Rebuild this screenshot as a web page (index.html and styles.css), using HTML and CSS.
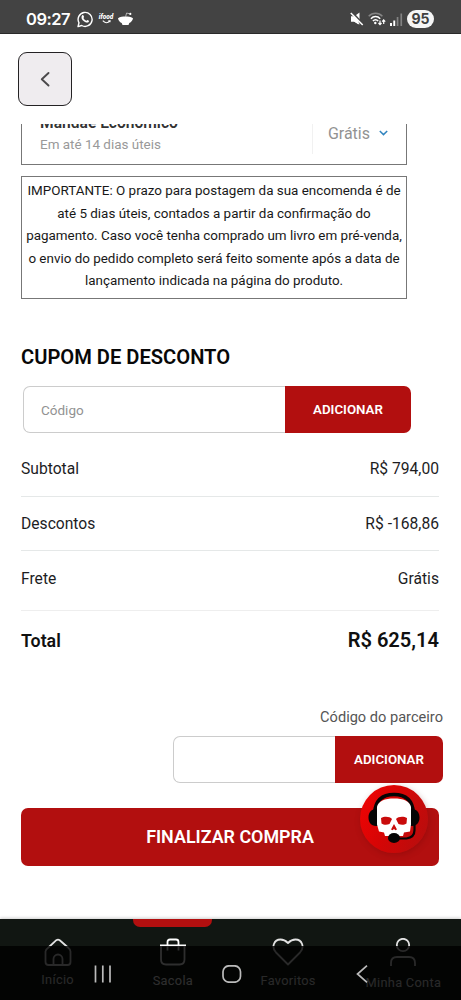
FILE: index.html
```html
<!DOCTYPE html>
<html lang="pt-BR">
<head>
<meta charset="utf-8">
<meta name="viewport" content="width=device-width">
<title>Sacola</title>
<link rel="stylesheet" href="styles.css">
</head>
<body>
<div class="screen">
  <header class="status">
    <span class="clock">09:27</span>
    <svg class="whats" width="16" height="17" viewBox="0 0 16 17" fill="none"><path d="M1 15.6 2 11.8A7 7 0 1 1 4.7 14.5Z" stroke="#fff" stroke-width="1.4" stroke-linejoin="round"/><path d="M5.1 4.4c.8-.7 1.3-.3 1.9 1.4.2.6-.7 1-.5 1.4.6 1.2 1.500 2 2.700 2.500.4.2.8-1 1.300-.8 1.500.6 1.800.9 1.300 1.800-1 1.500-3 1-4.900-.4C4.700 8.500 3.700 6 5.100 4.400Z" fill="#fff"/></svg>
    <span class="ifood"><span class="ifood-name">ifood</span><svg width="9" height="4" viewBox="0 0 9 4" fill="none"><path d="M.8.7c2 2.600 5 2.600 7 .2M6.300.7l1.800 0-.2 1.500" stroke="#fff" stroke-width="1.100"/></svg></span>
    <svg class="bowl" width="15" height="14" viewBox="0 0 15 14"><path d="M0 6.200C2 4.800 5 4.500 7.400 4.500s5.400.3 7.600 1.700c-.3 2.200-1.600 3.900-3.700 4.700L10.500 13h-6l-.8-2.100C1.600 10 .3 8.400 0 6.200Z" fill="#fff"/><path d="M7.500 5 8.600 1l3 .8" fill="none" stroke="#ccc" stroke-width=".8"/><circle cx="12.300" cy="1.900" r="1.100" fill="#fff"/></svg>
    <span class="status-right">
      <svg width="14" height="14" viewBox="0 0 14 14"><path d="M1 4.500h3L9.500.500v12L4 9.500H1Z" fill="#fff"/><path d="M1.500.500 13 13" stroke="#434343" stroke-width="3.200"/><path d="M.8 1 12.700 13" stroke="#fff" stroke-width="1.500"/><path d="M1 4.500h3.300L8.500 9v3.500L4 9.500H1Z" fill="#fff"/></svg>
      <svg width="18" height="14" viewBox="0 0 18 14" fill="none"><path d="M.7 4.300C4.600.200 10.500.200 14.400 4.300" stroke="#858585" stroke-width="1.500"/><path d="M2.900 6.700c2.700-2.800 6.600-2.800 9.300 0M4.900 9c1.600-1.700 3.700-1.700 5.300 0" stroke="#fff" stroke-width="1.500"/><circle cx="7.300" cy="11" r="1.200" fill="#fff"/><path d="M12 8.500v4m-1.500-1.500L12 12.700l1.500-1.700M15.700 12V8m-1.500 1.600 1.500-1.700 1.500 1.700" stroke="#fff" stroke-width="1.200"/></svg>
      <svg width="13" height="13" viewBox="0 0 13 13"><path d="M0 10h2v3H0Z M3.300 7.500h1.900V13H3.300Z" fill="#fff"/><path d="M6.700 4h1.700v9H6.700ZM10.400.500h1.700V13h-1.700Z" fill="#828282"/></svg>
      <b class="battery">95</b>
    </span>
  </header>

  <div class="topbar">
    <button class="back" aria-label="Voltar"><svg width="12" height="18" viewBox="0 0 12 18" fill="none"><path d="M9.500 3 2.800 9.300l6.700 6.200" stroke="#4b494b" stroke-width="1.900" stroke-linecap="round" stroke-linejoin="round"/></svg></button>
  </div>

  <main class="content">
    <section class="shipping">
      <div class="ship-info">
        <div class="ship-name">Mandaê Econômico</div>
        <div class="ship-time">Em até 14 dias úteis</div>
      </div>
      <div class="ship-price"><span>Grátis</span><svg width="9" height="6" viewBox="0 0 9 6" fill="none"><path d="m.8 1 3.700 3.600L8.200 1" stroke="#3285bf" stroke-width="1.500"/></svg></div>
    </section>

    <p class="notice">IMPORTANTE: O prazo para postagem da sua encomenda é de<br>até 5 dias úteis, contados a partir da confirmação do<br>pagamento. Caso você tenha comprado um livro em pré-venda,<br>o envio do pedido completo será feito somente após a data de<br>lançamento indicada na página do produto.</p>

    <h2 class="title">CUPOM DE DESCONTO</h2>
    <div class="field coupon"><span class="input">Código</span><button class="add">ADICIONAR</button></div>

    <div class="summary">
      <div class="line"><span>Subtotal</span><span>R$ 794,00</span></div>
      <div class="line"><span>Descontos</span><span>R$ -168,86</span></div>
      <div class="line freight"><span>Frete</span><span>Grátis</span></div>
      <div class="line total"><span>Total</span><span class="amount">R$ 625,14</span></div>
    </div>

    <div class="partner-label">Código do parceiro</div>
    <div class="field partner"><span class="input"></span><button class="add">ADICIONAR</button></div>

    <div class="checkout">
      <button class="finish">FINALIZAR COMPRA</button>
      <div class="chat">
        <svg width="68" height="68" viewBox="0 0 68 68">
          <path d="M14.500 28C15.500 14 24 9.500 34 9.500S52.500 14 53.500 28" fill="none" stroke="#050505" stroke-width="3.400"/>
          <path d="M18 24v17h-2c-5 0-7.500-4-7.500-8.500S11 24 16 24ZM50 24v17h2c5 0 7.500-4 7.500-8.500S57 24 52 24Z" fill="#050505"/>
          <path d="M17 22C18 16 25 13.500 34 13.500S50 16 51 22V39.500l-1 7-6 1-1 3.500H25l-1-3.500-5-1-2-7Z" fill="#fff"/>
          <path d="M21 33c3.500-2 9-1.500 11 1L29.500 39c-3 1.200-6 .8-8-.5Zm26 0c-3.500-2-9-1.500-11 1l2.500 5c3 1.200 6 .8 8-.5ZM34 39l-3 5.500 1.800.7 1.200-1.400 1.200 1.400 1.800-.7Z" fill="#c90b0b"/>
          <path d="M54.500 40v5c0 6-4 8-8 8.500h-8" fill="none" stroke="#050505" stroke-width="2.200"/>
          <ellipse cx="34" cy="53" rx="6" ry="5" fill="#050505"/>
        </svg>
      </div>
    </div>
  </main>

  <footer class="bottom">
    <nav class="tabs">
      <div class="tab"><svg width="28" height="28" viewBox="0 0 28 28"><path d="M4.500 9.500 12.300 2.200q1.700-1.300 3.400 0L24 9.500q2.500 2 2.500 4V24q0 3-3 3h-19q-3 0-3-3V13.500q0-2 3-4ZM9.500 27v-6a4.500 4.500 0 0 1 9 0v6"/></svg><span>Início</span></div>
      <div class="tab active"><svg width="28" height="28" viewBox="0 0 28 28"><path d="M1 7.500h26M2 7.500v14q0 5 5 5h13.500q5 0 5-5v-14M8.500 12.500V4q0-2.500 2.500-2.500h6Q19.500 1.500 19.500 4v8.500"/></svg><span class="low">Sacola</span></div>
      <div class="tab"><svg width="32" height="28" viewBox="0 0 32 28"><path d="M16 26.500 4 14.500C-1 9 2 1.500 8.500 1.500 12 1.500 14 3 16 5c2-2 4-3.500 7.500-3.500C30 1.500 33 9 28 14.500Z"/></svg><span class="low">Favoritos</span></div>
      <div class="tab"><svg width="28" height="28" viewBox="0 0 28 28"><circle cx="14" cy="7" r="6.200"/><path d="M2 28v-3q0-6 6-6h12q6 0 6 6v3"/></svg><span class="lower">Minha Conta</span></div>
    </nav>
    <div class="system">
      <svg class="recents" width="18" height="18" viewBox="0 0 18 18"><path d="M1.500.5v17M8.800.5v17M16 .5v17"/></svg>
      <svg class="home" width="20" height="18" viewBox="0 0 20 18"><rect x="1" y=".800" width="17.500" height="16.400" rx="6"/></svg>
      <svg class="prev" width="12" height="18" viewBox="0 0 12 18"><path d="M11 .7 1.500 9l9.500 8.300"/></svg>
    </div>
  </footer>
</div>
</body>
</html>
```
FILE: styles.css
```css
* { box-sizing: border-box; }
body { margin: 0; font-family: Roboto, "Liberation Sans", sans-serif; color: #1d1d1f; background: #fff; }
button { font: inherit; border: 0; padding: 0; }
svg { display: block; flex: none; }
.screen { width: 461px; height: 1000px; display: flex; flex-direction: column; overflow: hidden; }

.status { height: 34px; flex: none; display: flex; align-items: center; padding: 5px 27px 0 26px; background: #434343; color: #fff; border-bottom: 1px solid #292929; }
.clock { width: 51px; font: 600 16.500px Inter, sans-serif; letter-spacing: -.5px; }
.ifood { display: flex; flex-direction: column; align-items: center; width: 16px; margin: 0 4px 0 5px; }
.ifood-name { font: italic 900 6.500px/6px Roboto, sans-serif; }
.status-right { margin-left: auto; display: flex; align-items: center; gap: 4px; }
.battery { width: 27px; height: 18px; border-radius: 9px; background: #f5f5f5; color: #404040; text-align: center; font: 700 14px/18px Inter, sans-serif; }

.topbar { height: 90px; flex: none; padding: 18px 18px 0; }
.back { width: 54px; height: 54px; display: flex; align-items: center; justify-content: center; background: #efecef; border: 1.500px solid #242224; border-radius: 9px; }

.content { height: 795px; flex: none; overflow: hidden; padding: 0 22px 0 21px; }
.shipping { width: 386px; height: 61px; margin-top: -20px; padding: 9px 17px 0 18px; display: flex; justify-content: space-between; border: 1px solid #777; border-top: 0; }
.ship-name { font-size: 15.600px; font-weight: 600; line-height: 20px; color: #333; }
.ship-time { margin-top: 1px; color: #999; font-size: 13.450px; line-height: 22px; }
.ship-price { height: 41px; padding-left: 15px; display: flex; align-items: center; gap: 9px; border-left: 1px solid #f1f1f1; color: #929292; font-size: 16px; }
.ship-price svg { margin-right: 1px; margin-bottom: 2px; }
.notice { width: 386px; height: 123px; margin: 11px 0 0; padding-top: 3px; border: 1px solid #777; font-size: 13.430px; line-height: 22.500px; text-align: center; white-space: nowrap; color: #181818; }
.title { margin: 45px 0 0; font-size: 20.150px; font-weight: 600; line-height: 26px; color: #080808; }

.field { display: flex; height: 47px; }
.input { flex: 1; padding-left: 17px; border: 1px solid #ccc; border-right: 0; border-radius: 7px 0 0 7px; color: #929292; font-size: 13.500px; line-height: 46px; }
.add { background: #b20f0f; color: #fff; font-size: 13.300px; font-weight: 600; border-radius: 0 7px 7px 0; }
.coupon { width: 388px; margin: 16px 0 0 2px; }
.coupon .add { width: 126px; }

.summary { margin-top: 9px; }
.line { height: 54.700px; display: flex; justify-content: space-between; align-items: center; border-bottom: 1px solid #e5e8e8; font-size: 15.650px; }
.freight { height: 59.600px; padding-bottom: 5px; border-color: #eee; }
.total { height: 58px; padding-top: 1px; border: 0; font-size: 17.800px; font-weight: 600; color: #101010; }
.amount { font-size: 20.100px; }

.partner-label { margin: 38px -4px 0 0; font-size: 14.600px; line-height: 20px; text-align: right; color: #555; }
.partner { width: 270px; margin: 9px 0 0 152px; }
.partner .add { width: 108px; }

.checkout { position: relative; margin-top: 25px; }
.finish { display: block; width: 100%; height: 58px; background: #b20f0f; color: #fff; border-radius: 7px; font-size: 17.900px; font-weight: 600; }
.chat { position: absolute; left: 339px; top: -23px; width: 68px; height: 68px; border-radius: 50%; background: linear-gradient(115deg, #f00404 5%, #d60505 45%, #b90d0d 90%); box-shadow: 1px 2px 6px rgba(90, 0, 0, .25); }

.bottom { position: relative; height: 81px; flex: none; background: #111612; box-shadow: 0 -1px 3px rgba(0, 0, 0, .2); }
.tabs { display: grid; grid-template-columns: repeat(4, 1fr); height: 81px; }
.tab { display: flex; flex-direction: column; align-items: center; padding-top: 18.500px; color: #e2e2e2; font-size: 12.800px; white-space: nowrap; letter-spacing: .3px; }
.tab svg { fill: none; stroke: currentColor; stroke-width: 1.800; stroke-linejoin: round; }
.tab span { margin-top: 6px; line-height: 16px; }
.tab .low { margin-top: 7.500px; }
.tab .lower { margin-top: 9px; }
.active { position: relative; color: #fff; }
.active::before { content: ""; position: absolute; top: 0; left: 18px; width: 79px; height: 8px; border-radius: 0 0 7px 7px; background: #b20f0f; }
.system { position: absolute; inset: 27px 0 0; display: flex; padding: 19px 0 0 94px; background: rgba(0, 0, 0, .82); }
.system svg { fill: none; stroke: #bbb; stroke-width: 1.700; }
.system .home { margin-left: 110px; }
.system .prev { margin-left: 114px; }
```
